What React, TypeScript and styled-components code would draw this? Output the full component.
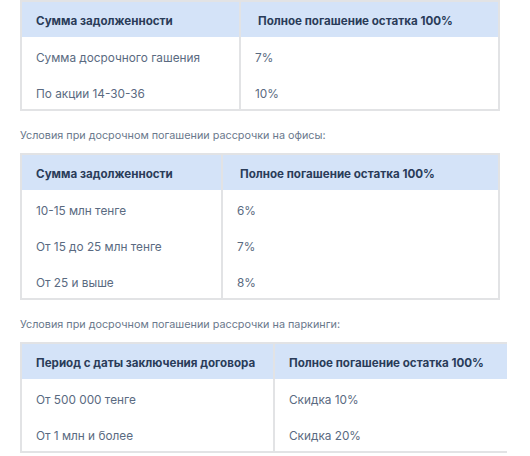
import React from "react";
import styled, { createGlobalStyle } from "styled-components";

interface TableData {
  head: [string, string];
  rows: [string, string][];
  firstCol: number;
  width: number;
  headIndent?: boolean;
  open?: boolean;
}

const tables: { caption?: string; data: TableData }[] = [
  {
    data: {
      head: ["Сумма задолженности", "Полное погашение остатка 100%"],
      rows: [
        ["Сумма досрочного гашения", "7%"],
        ["По акции 14-30-36", "10%"],
      ],
      firstCol: 217,
      width: 480,
      headIndent: true,
    },
  },
  {
    caption: "Условия при досрочном погашении рассрочки на офисы:",
    data: {
      head: ["Сумма задолженности", "Полное погашение остатка 100%"],
      rows: [
        ["10-15 млн тенге", "6%"],
        ["От 15 до 25 млн тенге", "7%"],
        ["От 25 и выше", "8%"],
      ],
      firstCol: 199,
      width: 480,
      headIndent: true,
    },
  },
  {
    caption: "Условия при досрочном погашении рассрочки на паркинги:",
    data: {
      head: ["Период с даты заключения договора", "Полное погашение остатка 100%"],
      rows: [
        ["От 500 000 тенге", "Скидка 10%"],
        ["От 1 млн и более", "Скидка 20%"],
      ],
      firstCol: 251,
      width: 487,
      open: true,
    },
  },
];

const Table = ({ data }: { data: TableData }) => {
  return (
    <Grid $width={data.width} $open={data.open}>
      <HeadRow $first={data.firstCol}>
        <HeadCell>{data.head[0]}</HeadCell>
        <HeadCell $second $indent={data.headIndent}>
          {data.head[1]}
        </HeadCell>
      </HeadRow>
      {data.rows.map((row, i) => (
        <Row key={i} $first={data.firstCol}>
          <Cell>{row[0]}</Cell>
          <Cell $second>{row[1]}</Cell>
        </Row>
      ))}
    </Grid>
  );
};

const App = () => {
  return (
    <Page>
      <GlobalStyle />
      {tables.map((t, i) => (
        <Section key={i}>
          {t.caption && <Caption>{t.caption}</Caption>}
          <Table data={t.data} />
        </Section>
      ))}
    </Page>
  );
};

export default App;

const GlobalStyle = createGlobalStyle`
  html, body {
    margin: 0;
    padding: 0;
    background: #fff;
  }
  body {
    font-family: Inter, "Noto Sans", sans-serif;
    overflow: hidden;
  }
`;

const Page = styled.div`
  padding: 0 0 0 20px;
  width: 530px;
  box-sizing: border-box;
`;

const Section = styled.section`
  display: flex;
  flex-direction: column;
`;

const Caption = styled.p`
  margin: 15px 0 7px;
  font-size: 10.8px;
  line-height: 20px;
  color: #6a788c;
`;

const Grid = styled.div<{ $width: number; $open?: boolean }>`
  width: ${(p) => p.$width}px;
  box-sizing: border-box;
  border: 2px solid #e2e3e5;
  border-right-color: ${(p) => (p.$open ? "transparent" : "#e2e3e5")};
  border-right-width: ${(p) => (p.$open ? "0" : "2px")};
`;

const Row = styled.div<{ $first: number }>`
  display: grid;
  grid-template-columns: ${(p) => p.$first}px 1fr;
  height: 36px;
`;

const HeadRow = styled(Row)`
  height: 35px;
  background: #d4e3f8;
`;

const Cell = styled.div<{ $second?: boolean }>`
  padding: 12px 10px 6px 14px;
  font-size: 11.8px;
  line-height: 18px;
  color: #5a6a81;
  white-space: nowrap;
  border-left: ${(p) => (p.$second ? "2px solid #e2e3e5" : "none")};
`;

const HeadCell = styled(Cell)<{ $indent?: boolean }>`
  padding-top: 10px;
  padding-left: ${(p) => (p.$indent ? "17px" : "14px")};
  font-size: 11.6px;
  font-weight: 650;
  color: #2a3c59;
`;
